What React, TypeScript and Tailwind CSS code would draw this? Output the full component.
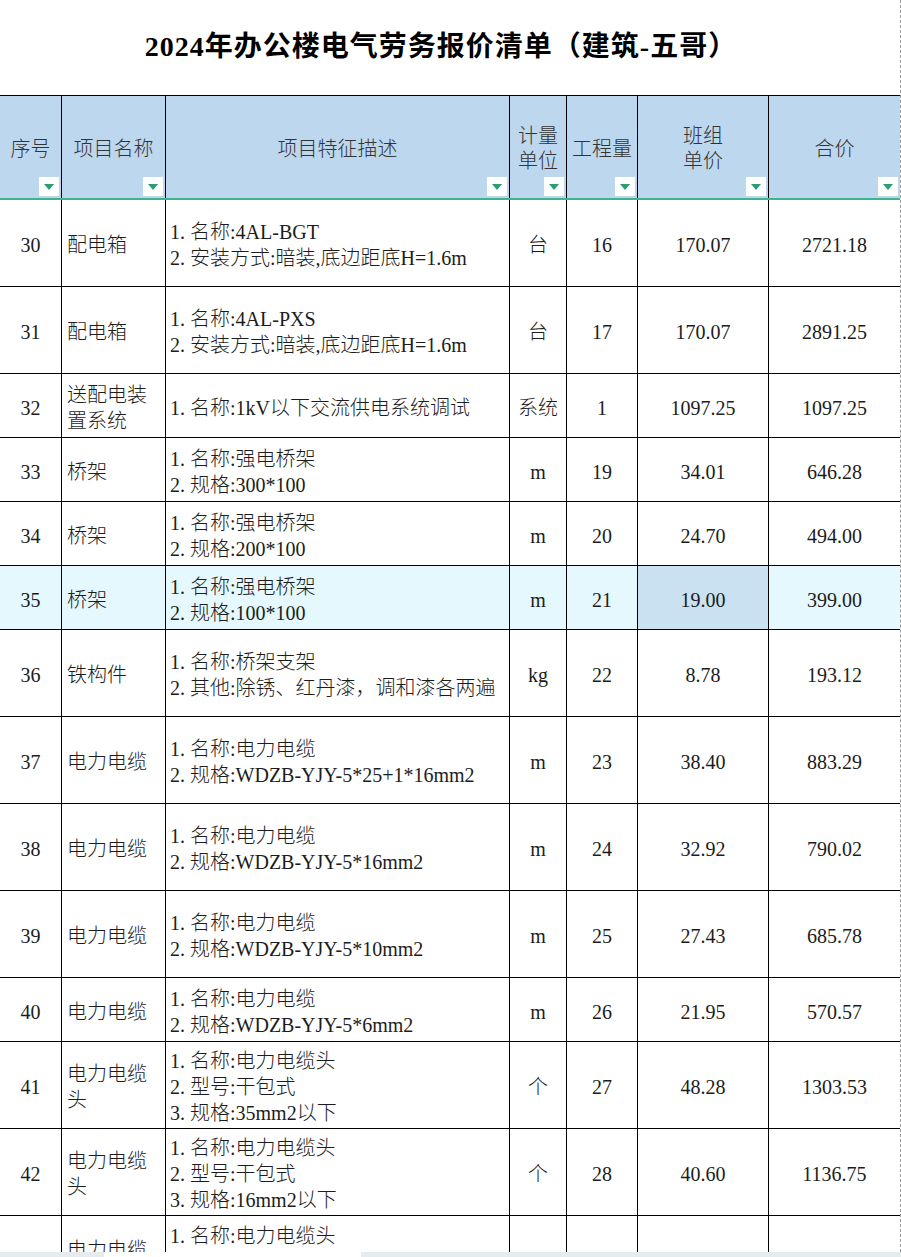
import React from "react";

type Row = {
  no: number;
  name: string;
  desc: string[];
  unit: string;
  qty: string;
  price: string;
  total: string;
  h: number;
  active?: boolean;
};

const rows: Row[] = [
  { no: 30, name: "配电箱", desc: ["1. 名称:4AL-BGT", "2. 安装方式:暗装,底边距底H=1.6m"], unit: "台", qty: "16", price: "170.07", total: "2721.18", h: 87 },
  { no: 31, name: "配电箱", desc: ["1. 名称:4AL-PXS", "2. 安装方式:暗装,底边距底H=1.6m"], unit: "台", qty: "17", price: "170.07", total: "2891.25", h: 87 },
  { no: 32, name: "送配电装置系统", desc: ["1. 名称:1kV以下交流供电系统调试"], unit: "系统", qty: "1", price: "1097.25", total: "1097.25", h: 64 },
  { no: 33, name: "桥架", desc: ["1. 名称:强电桥架", "2. 规格:300*100"], unit: "m", qty: "19", price: "34.01", total: "646.28", h: 64 },
  { no: 34, name: "桥架", desc: ["1. 名称:强电桥架", "2. 规格:200*100"], unit: "m", qty: "20", price: "24.70", total: "494.00", h: 64 },
  { no: 35, name: "桥架", desc: ["1. 名称:强电桥架", "2. 规格:100*100"], unit: "m", qty: "21", price: "19.00", total: "399.00", h: 64, active: true },
  { no: 36, name: "铁构件", desc: ["1. 名称:桥架支架", "2. 其他:除锈、红丹漆，调和漆各两遍"], unit: "kg", qty: "22", price: "8.78", total: "193.12", h: 87 },
  { no: 37, name: "电力电缆", desc: ["1. 名称:电力电缆", "2. 规格:WDZB-YJY-5*25+1*16mm2"], unit: "m", qty: "23", price: "38.40", total: "883.29", h: 87 },
  { no: 38, name: "电力电缆", desc: ["1. 名称:电力电缆", "2. 规格:WDZB-YJY-5*16mm2"], unit: "m", qty: "24", price: "32.92", total: "790.02", h: 87 },
  { no: 39, name: "电力电缆", desc: ["1. 名称:电力电缆", "2. 规格:WDZB-YJY-5*10mm2"], unit: "m", qty: "25", price: "27.43", total: "685.78", h: 87 },
  { no: 40, name: "电力电缆", desc: ["1. 名称:电力电缆", "2. 规格:WDZB-YJY-5*6mm2"], unit: "m", qty: "26", price: "21.95", total: "570.57", h: 64 },
  { no: 41, name: "电力电缆头", desc: ["1. 名称:电力电缆头", "2. 型号:干包式", "3. 规格:35mm2以下"], unit: "个", qty: "27", price: "48.28", total: "1303.53", h: 87 },
  { no: 42, name: "电力电缆头", desc: ["1. 名称:电力电缆头", "2. 型号:干包式", "3. 规格:16mm2以下"], unit: "个", qty: "28", price: "40.60", total: "1136.75", h: 87 },
];

const cols = "grid grid-cols-[62px_104px_344px_57px_71px_131px_131px]";

const FilterBtn = () => (
  <div className="absolute right-[2px] bottom-[2px] w-[20px] h-[19px] bg-white flex items-center justify-center">
    <svg width="10" height="6" viewBox="0 0 10 6">
      <polygon points="0,0 10,0 5,6" fill="#2b9e70" />
    </svg>
  </div>
);

const HeadCell = ({ children, last }: { children: React.ReactNode; last?: boolean }) => (
  <div className={`relative flex items-center justify-center text-center leading-[25px] pt-[4px] ${last ? "" : "border-r border-black"}`}>
    {children}
    <FilterBtn />
  </div>
);

export default function App() {
  return (
    <div
      className="w-[901px] h-[1257px] overflow-hidden flex flex-col bg-white text-[#1c1c1c] font-light"
      style={{ fontFamily: '"Liberation Serif", "Noto Sans CJK SC", serif' }}
    >
      <div className="flex-1 flex flex-col overflow-hidden border-r border-dashed border-[#9a9a9a] w-[901px]">
        <div className="h-[95px] shrink-0 flex items-center justify-center pr-[18px] pb-[2px]">
          <h1 className="text-[28px] font-bold text-black tracking-[1px]">2024年办公楼电气劳务报价清单（建筑-五哥）</h1>
        </div>

        <div className={`${cols} h-[105px] shrink-0 bg-[#bdd7ee] border-t border-black border-b-2 border-b-[#3fb38d] text-[20px] text-[#333]`}>
          <HeadCell>序号</HeadCell>
          <HeadCell>项目名称</HeadCell>
          <HeadCell>项目特征描述</HeadCell>
          <HeadCell>
            <span>计量<br />单位</span>
          </HeadCell>
          <HeadCell>工程量</HeadCell>
          <HeadCell>
            <span>班组<br />单价</span>
          </HeadCell>
          <HeadCell last>合价</HeadCell>
        </div>

        {rows.map((r) => (
          <div
            key={r.no}
            className={`${cols} shrink-0 border-b border-black text-[20px] ${r.active ? "bg-[#e4f8fd]" : ""}`}
            style={{ height: r.h }}
          >
            <div className="border-r border-black flex items-center justify-center pt-[4px]">{r.no}</div>
            <div className="border-r border-black flex items-center px-[5px] pt-[4px] leading-[26px]">{r.name}</div>
            <div className="border-r border-black flex flex-col justify-center pl-[4px] pt-[4px] leading-[26px] whitespace-nowrap overflow-hidden">
              {r.desc.map((d) => (
                <div key={d}>{d}</div>
              ))}
            </div>
            <div className="border-r border-black flex items-center justify-center pt-[4px]">{r.unit}</div>
            <div className="border-r border-black flex items-center justify-center pt-[4px]">{r.qty}</div>
            <div className={`border-r border-black flex items-center justify-center pt-[4px] ${r.active ? "bg-[#c9e1f1]" : ""}`}>{r.price}</div>
            <div className="flex items-center justify-center pt-[4px]">{r.total}</div>
          </div>
        ))}

        {/* row 43, only its top shows above the scroll bar */}
        <div className={`${cols} shrink-0 h-[87px] text-[20px]`}>
          <div className="border-r border-black" />
          <div className="border-r border-black px-[5px] pt-[21px] leading-[26px]">电力电缆</div>
          <div className="border-r border-black pl-[4px] pt-[7px] leading-[26px] whitespace-nowrap">1. 名称:电力电缆头</div>
          <div className="border-r border-black" />
          <div className="border-r border-black" />
          <div className="border-r border-black" />
          <div />
        </div>
      </div>

      <div className="h-[5px] shrink-0 flex">
        <div className="w-[104px] bg-[#e6ebee]" />
        <div className="w-[257px] bg-white" />
        <div className="flex-1 bg-[#e6ebee]" />
      </div>
    </div>
  );
}
